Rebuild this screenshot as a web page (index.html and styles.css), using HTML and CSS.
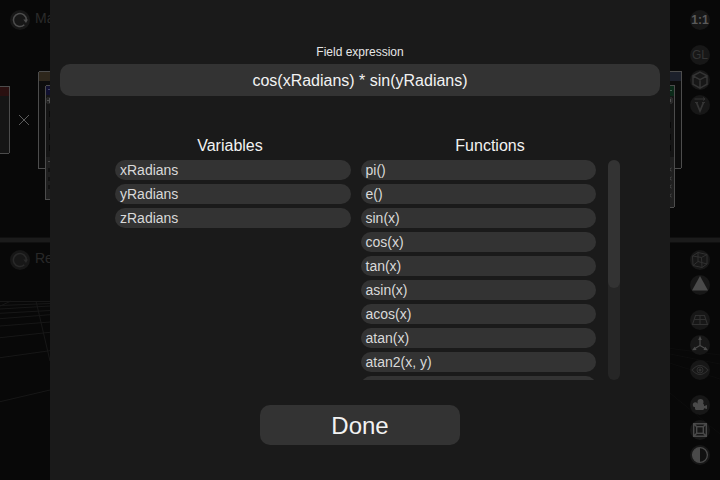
FILE: index.html
```html
<!DOCTYPE html>
<html lang="en">
<head>
<meta charset="utf-8">
<title>Field expression</title>
<link rel="stylesheet" href="styles.css">
</head>
<body>
<main class="workspace">
  <section class="panel">
    <svg class="scene" viewBox="0 0 720 237" shape-rendering="crispEdges">
      <rect x="-5" y="86" width="15" height="68" rx="2" fill="#4c4c4c"/>
      <rect x="-5" y="87" width="14" height="66" fill="#151515"/>
      <rect x="-5" y="87" width="14" height="9" fill="#2a1010"/>
      <path d="M19 115l10 10M29 115l-10 10" stroke="#5c5c5c" shape-rendering="auto"/>
      <rect x="38" y="71" width="30" height="98" rx="2" fill="#4c4c4c"/>
      <rect x="39" y="72" width="30" height="96" fill="#0d0d0d"/>
      <rect x="39" y="72" width="30" height="9" fill="#2e271c"/>
      <rect x="45" y="85" width="30" height="115" rx="2" fill="#4c4c4c"/>
      <rect x="46" y="86" width="30" height="113" fill="#151515"/>
      <rect x="46" y="86" width="30" height="9" fill="#111130"/>
      <path d="M48 89.500h2" stroke="#444466"/>
      <circle cx="50" cy="100.500" r="4" fill="#262626"/>
      <path d="M47 100.500h4M49.500 98v5" stroke="#505050"/>
      <rect x="46" y="157" width="30" height="42" fill="#1f1f1f"/>
      <path d="M49.500 111v6M49.500 122v6M49.500 134v6M49.500 145v6" stroke="#080808"/>
      <path d="M48 161.500h3" stroke="#484848"/>
      <path d="M48 168h3v4h-3zM48 177h3v4h-3zM48 185h3v4h-3z" fill="#111"/>
      <rect x="650" y="71" width="32" height="98" rx="2" fill="#4c4c4c"/>
      <rect x="650" y="72" width="31" height="96" fill="#0d0d0d"/>
      <rect x="650" y="72" width="31" height="9" fill="#1c202b"/>
      <rect x="650" y="85" width="25" height="123" rx="2" fill="#4c4c4c"/>
      <rect x="650" y="86" width="24" height="121" fill="#151515"/>
      <rect x="650" y="86" width="24" height="10" fill="#0b2a19"/>
      <path d="M670 90.500h2" stroke="#456050"/>
      <rect x="660" y="97" width="13" height="7" rx="3" fill="#292929"/>
      <path d="M670.500 99v3" stroke="#505050"/>
      <rect x="650" y="157" width="24" height="50" fill="#1f1f1f"/>
      <path d="M670.500 122v6M670.500 134v6M670.500 145v6" stroke="#080808"/>
      <path d="M671.500 168l-2 1.500 2 1.500M671.500 177l-2 1.500 2 1.500M671.500 185l-2 1.500 2 1.500M671.500 194l-2 1.500 2 1.500" stroke="#4c4c4c" fill="none" shape-rendering="auto"/>
    </svg>
    <header class="caption bright">
      <svg class="icon" viewBox="0 0 20 20"><path d="M14.300 14.800A6.500 6.500 0 1 1 16.400 10" fill="none" stroke="#4d4d4d" stroke-width="1.500"/><path d="M13.300 9.500l2.700 3.500 2-3.500z" fill="#4d4d4d"/></svg>
      <span>Material</span>
    </header>
    <nav class="tools">
      <span class="icon ratio">1:1</span>
      <span class="icon gl">GL</span>
      <svg class="icon" viewBox="0 0 20 20"><path d="M10 2.200l7 3.600v8.400l-7 3.900-7-3.900V5.800zM3 5.800l7 3.800 7-3.800M10 9.600v8.500" fill="none" stroke="#343434" stroke-width="1.500"/></svg>
      <svg class="icon" viewBox="0 0 20 20"><path d="M4.500 4h10M13 2.500l2 1.500-2 1.500" fill="none" stroke="#343434"/><path d="M5 7.500h3M12 7.500h3" stroke="#343434"/><path d="M6.500 7.500L10 16l3.500-8.500" fill="none" stroke="#343434" stroke-width="1.800"/></svg>
    </nav>
  </section>
  <div class="splitter"></div>
  <section class="panel">
    <svg class="scene" viewBox="0 0 720 237" fill="none" stroke="#171717">
      <path d="M0 59.500h50M0 63.500L50 61.500M0 67L50 64M0 71.300L50 68.500M0 76.700L50 72.700M0 84L50 80M0 95.700L50 90.300M0 115.700L50 108.700M0 159.700L50 148M36 59L50 119M-2 65L11 59"/>
      <path d="M660 105l60 8M660 110l60 12M660 118l60 19M665 147l55 45" stroke="#0d0d0d"/>
    </svg>
    <header class="caption">
      <svg class="icon" viewBox="0 0 20 20"><path d="M14.300 14.800A6.500 6.500 0 1 1 16.400 10" fill="none" stroke="#292929" stroke-width="1.500"/><path d="M13.300 9.500l2.700 3.500 2-3.500z" fill="#292929"/></svg>
      <span>Render</span>
    </header>
    <nav class="tools">
      <svg class="icon" viewBox="0 0 20 20"><path d="M2.500 6L8 2.500 17 4.500V14l-5 3.500L3 15.500zM2.500 6l9 1.500L17 4.500M11.500 7.500l.5 10M8 2.500v9L3 15.500M8 11.500l9 2.500" fill="none" stroke="#303030"/></svg>
      <svg class="icon" viewBox="0 0 20 20"><path d="M10 1l8 14.500H2z" fill="#4a4a4a"/></svg>
      <svg class="icon spaced" viewBox="0 0 20 20"><path d="M5.500 5.500h9l3 9h-15zM4 9.500h12M10 5.500v9" fill="none" stroke="#303030" stroke-width="1.100"/></svg>
      <svg class="icon" viewBox="0 0 20 20"><path d="M10 3v7.500M10 10.500L4 14M10 10.500l6 3.500" stroke="#4a4a4a" stroke-width="1.200"/><path d="M10 .8l1.800 4.200H8.200zM2 15.300l2.700-3.600 1.900 3.200zM18 15.300l-2.700-3.600-1.900 3.200z" fill="#4a4a4a"/></svg>
      <svg class="icon" viewBox="0 0 20 20"><path d="M2 10q8-9 16 0q-8 9-16 0z" fill="none" stroke="#303030" stroke-width="1.100"/><circle cx="10" cy="10" r="3" fill="none" stroke="#303030"/><circle cx="10" cy="10" r="1.500" fill="#303030"/></svg>
      <svg class="icon spaced" viewBox="0 0 20 20"><g fill="#4a4a4a"><circle cx="10.500" cy="7" r="3"/><circle cx="5.300" cy="9.800" r="2.500"/><rect x="5" y="8.500" width="9" height="6.500" rx="1.500"/><path d="M13 11.500l4-1.500v4l-4-1z"/></g></svg>
      <svg class="icon" viewBox="0 0 20 20"><path d="M3.700 3.700h12.600v12.600H3.700zM3.700 3.700l12.600 12.600M16.300 3.700L3.700 16.300" fill="none" stroke="#4a4a4a" stroke-width="1.400"/><rect x="6.700" y="6.700" width="6.600" height="6.600" fill="#171717" stroke="#4a4a4a" stroke-width="1.400"/></svg>
      <svg class="icon" viewBox="0 0 20 20"><circle cx="10" cy="10" r="7.400" fill="#111" stroke="#4a4a4a" stroke-width="1.300"/><path d="M10 2.600a7.400 7.400 0 0 0 0 14.800z" fill="#4a4a4a"/></svg>
    </nav>
  </section>
</main>

<div class="dialog">
  <label class="field-label">Field expression</label>
  <div class="field">cos(xRadians) * sin(yRadians)</div>
  <div class="columns">
    <section class="column">
      <h2>Variables</h2>
      <ul class="list">
        <li>xRadians</li>
        <li>yRadians</li>
        <li>zRadians</li>
      </ul>
    </section>
    <section class="column functions">
      <h2>Functions</h2>
      <ul class="list">
        <li>pi()</li>
        <li>e()</li>
        <li>sin(x)</li>
        <li>cos(x)</li>
        <li>tan(x)</li>
        <li>asin(x)</li>
        <li>acos(x)</li>
        <li>atan(x)</li>
        <li>atan2(x, y)</li>
        <li></li>
      </ul>
    </section>
    <div class="scrollbar"><div class="thumb"></div></div>
  </div>
  <button class="done">Done</button>
</div>
</body>
</html>
```
FILE: styles.css
```css
* { box-sizing: border-box; }
body {
  margin: 0;
  width: 720px;
  height: 480px;
  overflow: hidden;
  position: relative;
  background: #080808;
  font-family: "Liberation Sans", Arial, sans-serif;
}
.workspace { display: flex; flex-direction: column; height: 480px; }
.panel {
  position: relative;
  height: 238px;
  display: flex;
  justify-content: space-between;
  align-items: flex-start;
  padding: 10px 10px 0;
}
.panel:last-child { padding-top: 8px; }
.splitter { height: 4px; background: #1b1b1b; box-shadow: 0 0 0 1px #101010; z-index: 1; }
.scene { position: absolute; left: 0; top: 0; width: 720px; height: 237px; }
.caption {
  position: relative;
  display: flex;
  align-items: center;
  gap: 5px;
  height: 20px;
  font-size: 14px;
  line-height: 16px;
  color: #282828;
}
.caption span { position: relative; top: -2px; }
.caption.bright { color: #2b2b2b; }
.tools { position: relative; display: flex; flex-direction: column; gap: 5px; }
.icon {
  display: block;
  width: 20px;
  height: 20px;
  flex: none;
  border-radius: 50%;
  background: #171717;
}
.icon.spaced { margin-top: 10px; }
.icon.ratio {
  margin-bottom: 10px;
  color: #5a5a5a;
  font-size: 12px;
  font-weight: bold;
  line-height: 20px;
  text-align: center;
}
.icon.gl {
  color: #343434;
  font-size: 12px;
  line-height: 21px;
  text-align: center;
}
.dialog {
  position: absolute;
  z-index: 2;
  left: 50px;
  top: 0;
  width: 620px;
  height: 480px;
  padding: 44px 10px 0;
  display: flex;
  flex-direction: column;
  align-items: center;
  background: #1a1a1a;
  color: #f2f2f2;
}
.field-label { height: 20px; font-size: 12px; line-height: 16px; color: #e6e6e6; }
.field {
  width: 600px;
  height: 32px;
  border-radius: 10px;
  background: #333;
  font-size: 16px;
  line-height: 33px;
  text-align: center;
}
.columns {
  display: flex;
  align-self: flex-start;
  margin: 40px 0 0 55px;
  height: 244px;
}
.column { width: 236px; margin-right: 10px; }
.functions { width: 235px; margin-right: 12px; }
h2 {
  margin: 0;
  height: 24px;
  font-size: 16px;
  font-weight: normal;
  line-height: 19px;
  text-align: center;
}
.column:not(.functions) h2 { padding-right: 6px; }
.functions h2 { padding-left: 23px; }
.list {
  display: flex;
  flex-direction: column;
  gap: 4px;
  height: 220px;
  margin: 0;
  padding: 0;
  overflow: hidden;
  list-style: none;
}
.list li {
  flex: none;
  height: 20px;
  padding-left: 5px;
  border-radius: 10px;
  background: #333;
  font-size: 14px;
  line-height: 20px;
  color: #d9d9d9;
}
.functions li { padding-left: 4.500px; }
.scrollbar { width: 12px; height: 220px; margin-top: 24px; border-radius: 6px; background: #262626; }
.thumb { height: 128px; border-radius: 6px; background: #333; }
.done {
  margin-top: 25px;
  width: 200px;
  height: 40px;
  padding: 1px 0 0;
  border: 0;
  border-radius: 10px;
  background: #333;
  color: #f2f2f2;
  font: 24px/39px "Liberation Sans", Arial, sans-serif;
}
```
